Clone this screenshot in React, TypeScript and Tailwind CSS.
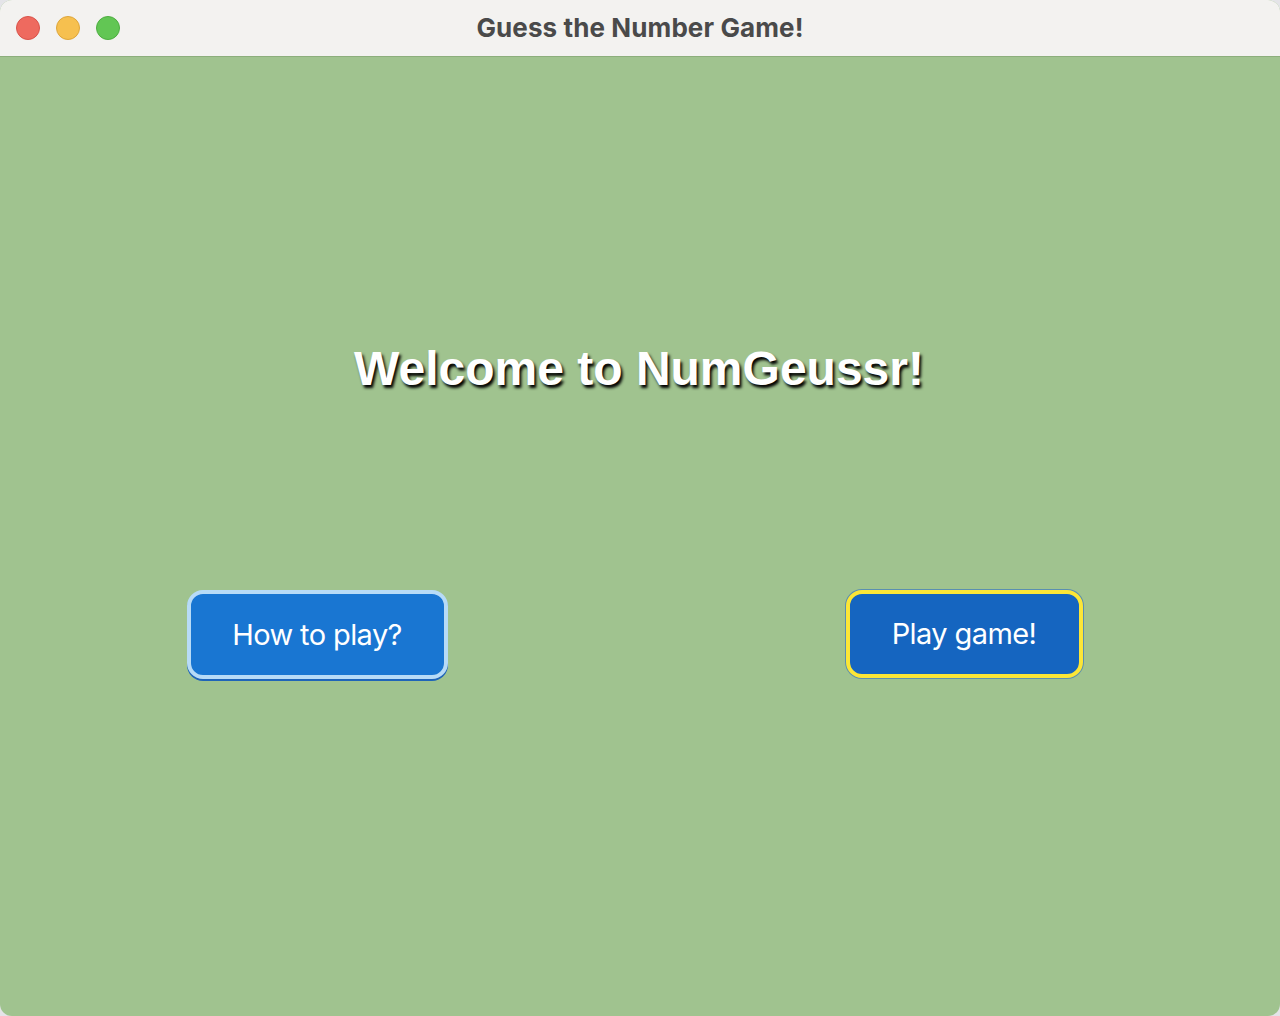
import React from "react";

export default function App() {
  return (
    <div className="w-[1280px] h-[1016px] bg-[#e4e4e8] overflow-hidden">
      <div className="w-full h-full rounded-[12px] overflow-hidden flex flex-col bg-[#a0c38f]">
        <div className="h-[57px] shrink-0 bg-[#f3f2f0] border-b border-[#8cae7c] relative flex items-center justify-center pb-[2px]">
          <div className="absolute left-[16px] top-[16px] flex gap-[16px]">
            <div className="w-[24px] h-[24px] rounded-full bg-[#ee6a5f] border border-[#d9534a]" />
            <div className="w-[24px] h-[24px] rounded-full bg-[#f6c04f] border border-[#dea63a]" />
            <div className="w-[24px] h-[24px] rounded-full bg-[#62c654] border border-[#4dae40]" />
          </div>
          <span
            className="text-[26px] font-bold text-[#4a4a4a] tracking-[0.1px]"
            style={{ fontFamily: "Inter, 'Noto Sans', sans-serif" }}
          >
            Guess the Number Game!
          </span>
        </div>
        <div className="flex-1 flex flex-col">
          <div className="flex flex-col">
            <div className="h-[336px] flex items-end justify-center">
              <h1
                className="text-[48px] font-bold text-white leading-none translate-x-[-1px]"
                style={{
                  fontFamily: "'Liberation Sans', Arial, sans-serif",
                  textShadow: "2px 3px 3px rgba(0,0,0,1)",
                }}
              >
                Welcome to NumGeussr!
              </h1>
            </div>
            <div className="h-[197px]" />
            <div className="grid grid-cols-2">
              <div className="flex justify-center pr-[6px]">
                <button
                  className="w-[261px] h-[89px] rounded-[16px] bg-[#1976d2] border-[4px] border-[#b7dbf7] text-white text-[29px] tracking-[-0.6px] shadow-[0_2px_0_#1f64b8]"
                  style={{ fontFamily: "Inter, 'Noto Sans', sans-serif" }}
                >
                  How to play?
                </button>
              </div>
              <div className="flex justify-center pl-[8px]">
                <button
                  className="w-[237px] h-[88px] rounded-[16px] bg-[#1565c0] border-[4px] border-[#fbe637] text-white text-[29px] tracking-[-0.6px] shadow-[0_0_0_1px_#5a8fb0]"
                  style={{ fontFamily: "Inter, 'Noto Sans', sans-serif" }}
                >
                  Play game!
                </button>
              </div>
            </div>
          </div>
        </div>
      </div>
    </div>
  );
}
